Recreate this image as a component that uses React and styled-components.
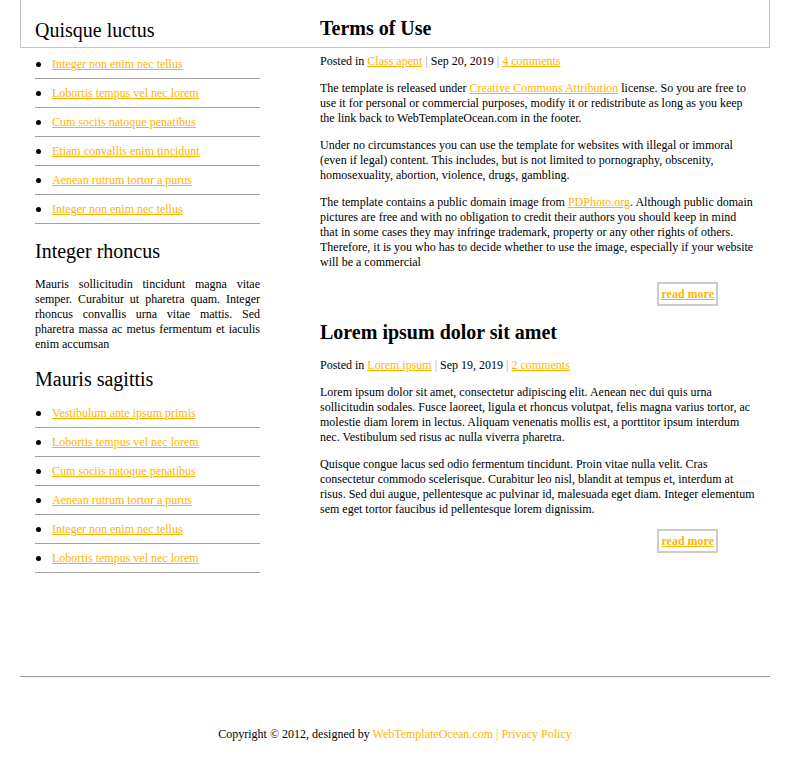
import styled, { createGlobalStyle } from "styled-components";

const GlobalStyle = createGlobalStyle`
  body {
    margin: 0;
    background: #fff;
    font-family: "Liberation Serif", "Times New Roman", serif;
    font-size: 12px;
    line-height: 15px;
    color: #000;
  }
  a {
    color: #ffb300;
  }
`;

const Page = styled.div`
  position: relative;
  width: 750px;
  margin: 0 20px;
`;

const HeaderFrame = styled.div`
  position: absolute;
  top: -2px;
  left: 0;
  right: 0;
  height: 48px;
  border: 1px solid #c4c4c4;
  pointer-events: none;
`;

const Columns = styled.div`
  display: flex;
  gap: 60px;
  padding: 0 15px;
`;

const Sidebar = styled.aside`
  width: 225px;
  padding-top: 18px;
  display: flex;
  flex-direction: column;
  gap: 15px;
`;

const SideHeading = styled.h2`
  margin: 0 0 8px;
  font-size: 20px;
  line-height: 24px;
  font-weight: normal;
`;

const LinkList = styled.ul`
  list-style: none;
  margin: 0;
  padding: 0;
`;

const LinkItem = styled.li`
  display: flex;
  align-items: center;
  gap: 11px;
  padding: 7px 0 6px;
  border-bottom: 1px solid #a0a0a0;

  &::before {
    content: "";
    width: 5px;
    height: 5px;
    margin-left: 1px;
    border-radius: 50%;
    background: #000;
  }
`;

const SideText = styled.p`
  margin: 14px 0 0;
  text-align: justify;
`;

const Main = styled.main`
  flex: 1;
  padding-top: 16px;
`;

const Post = styled.article`
  & + & {
    margin-top: 14px;
  }
`;

const PostTitle = styled.h2`
  margin: 0 0 14px;
  font-size: 20px;
  line-height: 24px;
  font-weight: bold;
`;

const Meta = styled.div`
  margin-bottom: 12px;
`;

const Pipe = styled.span`
  color: #a3a3c2;
`;

const Para = styled.p`
  margin: 0 0 12px;
`;

const MoreRow = styled.div`
  display: flex;
  justify-content: flex-end;
  padding-right: 37px;
`;

const MoreButton = styled.a`
  display: inline-block;
  padding: 3px 2px 2px;
  border: 2px solid #cccccc;
  font-weight: bold;
  color: #ffb300;
`;

const Footer = styled.footer`
  margin-top: 103px;
  border-top: 1px solid #9a9a9a;
  padding-top: 50px;
  padding-bottom: 34px;
  text-align: center;

  a {
    text-decoration: none;
  }
`;

const links1 = [
  "Integer non enim nec tellus",
  "Lobortis tempus vel nec lorem",
  "Cum sociis natoque penatibus",
  "Etiam convallis enim tincidunt",
  "Aenean rutrum tortor a purus",
  "Integer non enim nec tellus",
];

const links2 = [
  "Vestibulum ante ipsum primis",
  "Lobortis tempus vel nec lorem",
  "Cum sociis natoque penatibus",
  "Aenean rutrum tortor a purus",
  "Integer non enim nec tellus",
  "Lobortis tempus vel nec lorem",
];

const SideLinks = ({ items }) => (
  <LinkList>
    {items.map((t, i) => (
      <LinkItem key={i}>
        <a href="#">{t}</a>
      </LinkItem>
    ))}
  </LinkList>
);

const PostMeta = ({ category, date, comments }) => (
  <Meta>
    Posted in <a href="#">{category}</a> <Pipe>|</Pipe> {date} <Pipe>|</Pipe>{" "}
    <a href="#">{comments}</a>
  </Meta>
);

export default function App() {
  return (
    <>
      <GlobalStyle />
      <Page>
        <HeaderFrame />
        <Columns>
          <Sidebar>
            <section>
              <SideHeading>Quisque luctus</SideHeading>
              <SideLinks items={links1} />
            </section>
            <section>
              <SideHeading>Integer rhoncus</SideHeading>
              <SideText>
                Mauris sollicitudin tincidunt magna vitae semper. Curabitur ut
                pharetra quam. Integer rhoncus convallis urna vitae mattis. Sed
                pharetra massa ac metus fermentum et iaculis enim accumsan
              </SideText>
            </section>
            <section>
              <SideHeading>Mauris sagittis</SideHeading>
              <SideLinks items={links2} />
            </section>
          </Sidebar>
          <Main>
            <Post>
              <PostTitle>Terms of Use</PostTitle>
              <PostMeta category="Class apent" date="Sep 20, 2019" comments="4 comments" />
              <Para>
                The template is released under{" "}
                <a href="#">Creative Commons Attribution</a> license. So you are
                free to use it for personal or commercial purposes, modify it or
                redistribute as long as you keep the link back to
                WebTemplateOcean.com in the footer.
              </Para>
              <Para>
                Under no circumstances you can use the template for websites with
                illegal or immoral (even if legal) content. This includes, but is
                not limited to pornography, obscenity, homosexuality, abortion,
                violence, drugs, gambling.
              </Para>
              <Para>
                The template contains a public domain image from{" "}
                <a href="#">PDPhoto.org</a>. Although public domain pictures are
                free and with no obligation to credit their authors you should
                keep in mind that in some cases they may infringe trademark,
                property or any other rights of others. Therefore, it is you who
                has to decide whether to use the image, especially if your
                website will be a commercial
              </Para>
              <MoreRow>
                <MoreButton href="#">read more</MoreButton>
              </MoreRow>
            </Post>
            <Post>
              <PostTitle>Lorem ipsum dolor sit amet</PostTitle>
              <PostMeta category="Lorem ipsum" date="Sep 19, 2019" comments="2 comments" />
              <Para>
                Lorem ipsum dolor sit amet, consectetur adipiscing elit. Aenean
                nec dui quis urna sollicitudin sodales. Fusce laoreet, ligula et
                rhoncus volutpat, felis magna varius tortor, ac molestie diam
                lorem in lectus. Aliquam venenatis mollis est, a porttitor ipsum
                interdum nec. Vestibulum sed risus ac nulla viverra pharetra.
              </Para>
              <Para>
                Quisque congue lacus sed odio fermentum tincidunt. Proin vitae
                nulla velit. Cras consectetur commodo scelerisque. Curabitur leo
                nisl, blandit at tempus et, interdum at risus. Sed dui augue,
                pellentesque ac pulvinar id, malesuada eget diam. Integer
                elementum sem eget tortor faucibus id pellentesque lorem
                dignissim.
              </Para>
              <MoreRow>
                <MoreButton href="#">read more</MoreButton>
              </MoreRow>
            </Post>
          </Main>
        </Columns>
        <Footer>
          Copyright © 2012, designed by{" "}
          <a href="#">WebTemplateOcean.com | Privacy Policy</a>
        </Footer>
      </Page>
    </>
  );
}
